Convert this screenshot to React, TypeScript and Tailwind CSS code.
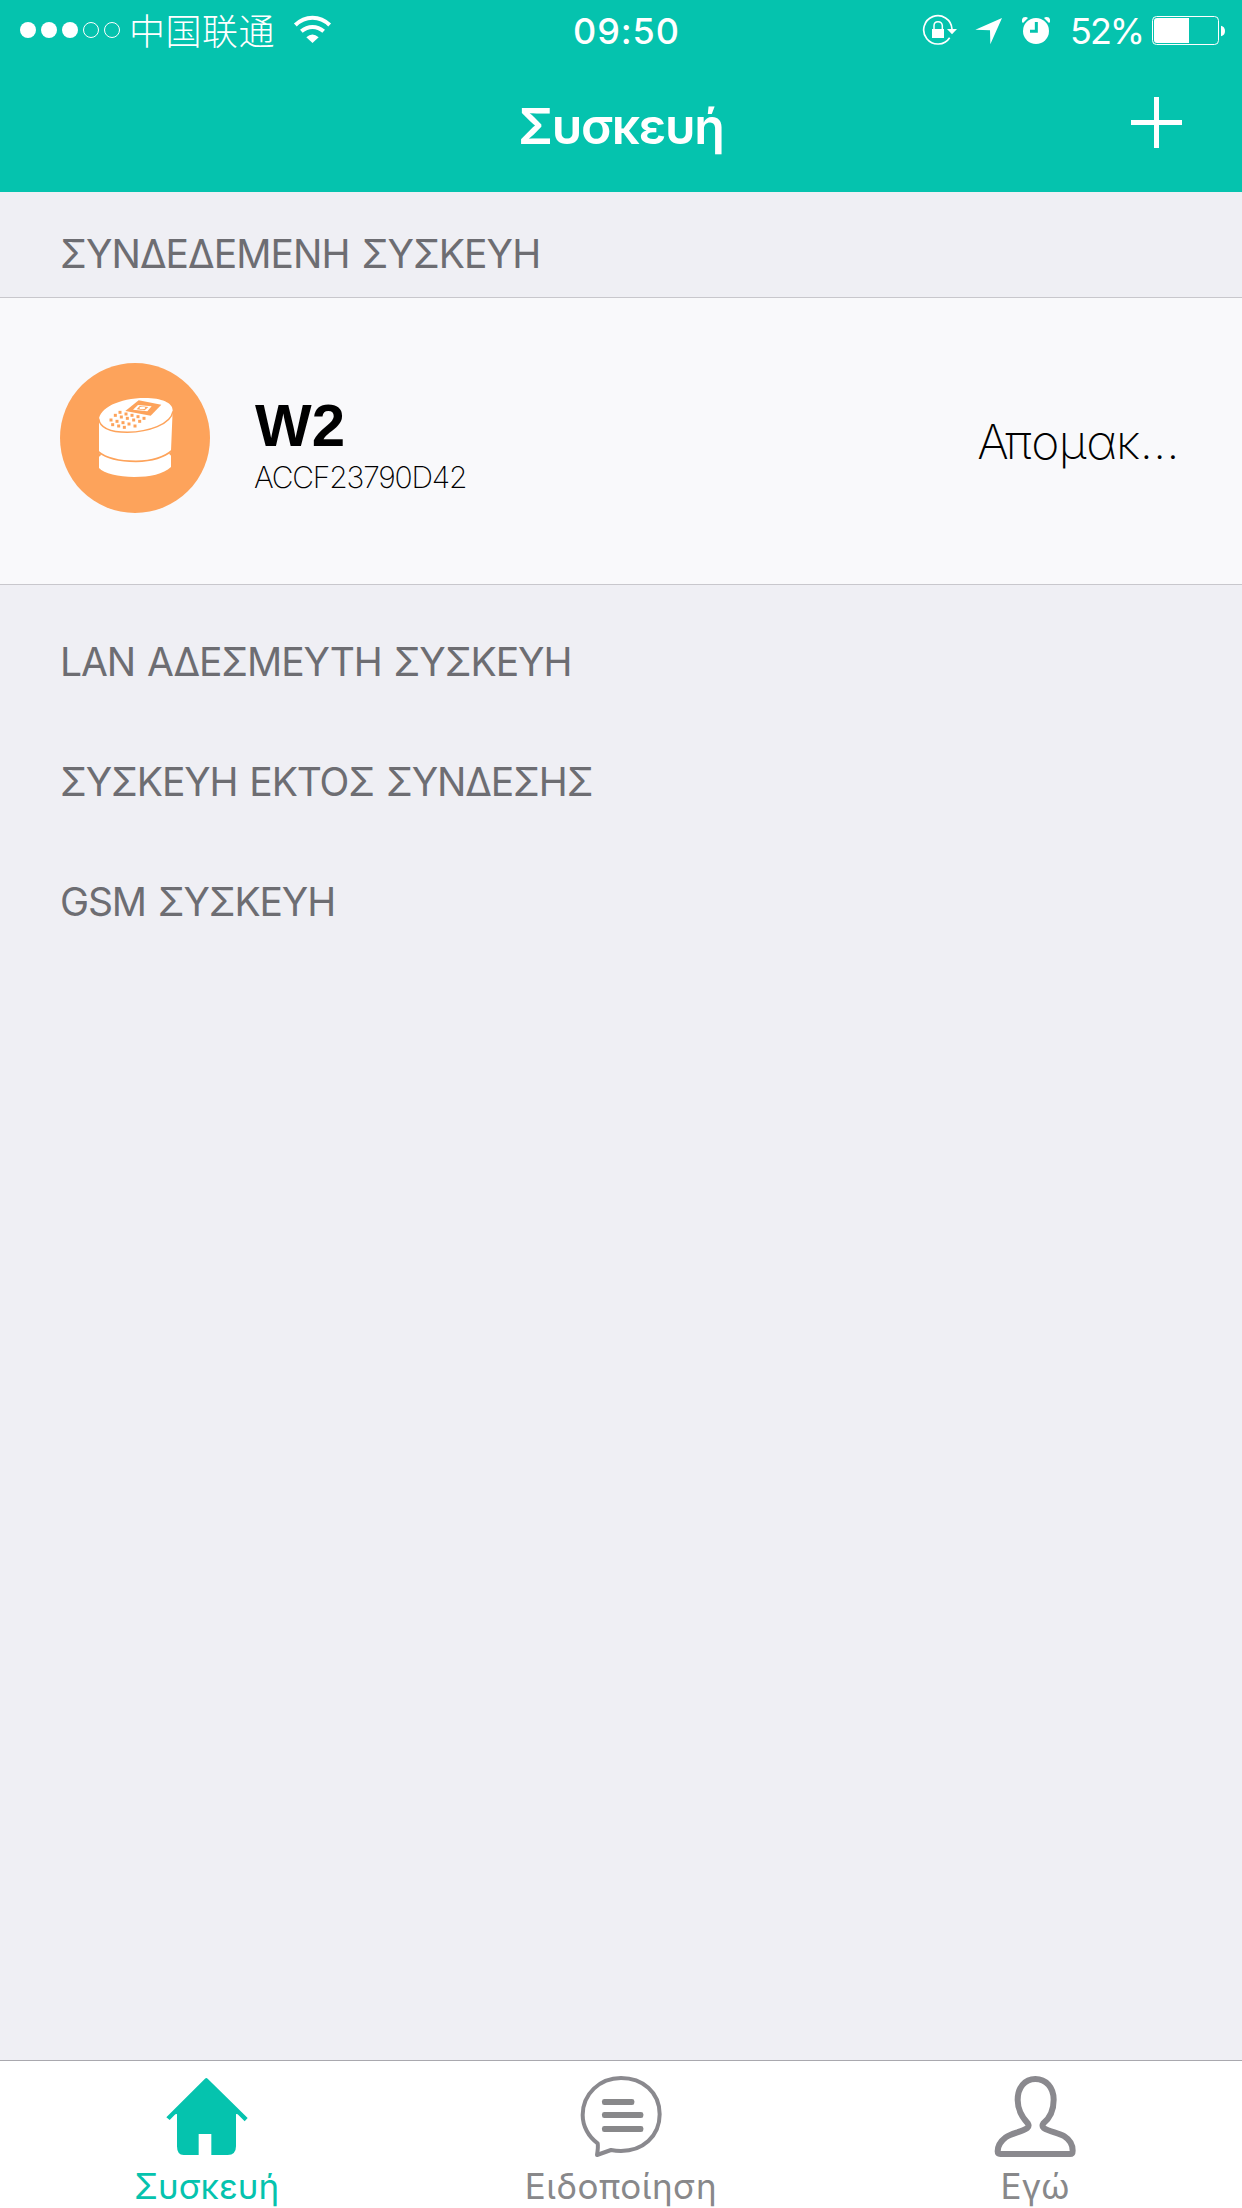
import type { ReactNode } from "react";
import clsx from "clsx";

const unboundSections = [
    { title: "LAN ΑΔΕΣΜΕΥΤΗ ΣΥΣΚΕΥΗ", tracking: "tracking-[-1.08px]" },
    { title: "ΣΥΣΚΕΥΗ ΕΚΤΟΣ ΣΥΝΔΕΣΗΣ", tracking: "tracking-[-1.12px]" },
    { title: "GSM ΣΥΣΚΕΥΗ", tracking: "tracking-[-1.15px]" },
];

function SignalDots() {
    return (
        <svg className="w-[100px] h-10" viewBox="60 30 300 120">
            {[84, 147, 210].map((cx) => (
                <circle key={cx} cx={cx} cy="90" r="24" fill="#fff" />
            ))}
            {[273, 336].map((cx) => (
                <circle key={cx} cx={cx} cy="90" r="22.500" fill="none" stroke="#fff" strokeWidth="3" />
            ))}
        </svg>
    );
}

function WifiIcon() {
    return (
        <svg className="w-[39px] h-10" viewBox="879 30 117 120">
            <g fill="none" stroke="#fff" strokeWidth="12">
                <path d="M886 75Q908 53 937.500 53T989 75" />
                <path d="M904 94Q919 81 937.500 81T971 94" />
            </g>
            <path d="M937.500 129L919 112Q937 95 956 112Z" fill="#fff" />
        </svg>
    );
}

function RotationLockIcon() {
    return (
        <svg className="w-9 h-10" viewBox="66 30 108 120">
            <path d="M156 87A42.500 42.500 0 1 0 149 113" fill="none" stroke="#fff" strokeWidth="5" />
            <path d="M141 87H171L156 103Z" fill="#fff" />
            <path d="M96 87H132V114H96Z" fill="#fff" />
            <path d="M102 89V77Q102 65 114 65T127 77V89" fill="none" stroke="#fff" strokeWidth="4.500" />
        </svg>
    );
}

function LocationIcon() {
    return (
        <svg className="w-7 h-10" viewBox="225 30 84 120">
            <path d="M306 54L271 133L270 91L226 89Z" fill="#fff" />
        </svg>
    );
}

function AlarmIcon() {
    return (
        <svg className="w-[30px] h-10" viewBox="363 30 90 120">
            <circle cx="408" cy="93" r="39" fill="#fff" />
            <path d="M366 66V58Q368 51 376 51Q381 51 384 54L369 69Z" fill="#fff" />
            <path d="M450 66V58Q448 51 440 51Q435 51 432 54L447 69Z" fill="#fff" />
            <path d="M409 66V94H390" fill="none" stroke="#05c3ae" strokeWidth="9" />
        </svg>
    );
}

function BatteryIcon() {
    return (
        <svg className="w-[75px] h-10" viewBox="753 30 225 120">
            <rect x="757.500" y="49.500" width="198" height="84" rx="12" fill="none" stroke="#fff" strokeWidth="3" />
            <path d="M867 54V129H771Q762 129 762 120V63Q762 54 771 54Z" fill="#fff" />
            <path d="M963 77Q975 80 975 93T963 109Z" fill="#fff" />
        </svg>
    );
}

function DeviceIcon() {
    const holes = [
        [240, 217], [226, 226], [258, 222], [213, 240], [244, 231], [276, 226], [231, 244], [262, 235], [294, 230],
        [218, 254], [249, 248], [281, 240], [312, 235], [236, 258], [267, 252], [299, 244], [253, 262], [285, 258],
    ];
    return (
        <svg className="w-[150px] h-[150px]" viewBox="60 69 450 450">
            <circle cx="285" cy="294" r="225" fill="#fda35b" />
            <path d="M177 240C177 205 237 174 315 174C365 174 398 188 398 211L393 333C393 333 393 375 393 381C370 402 330 411 283 411C235 411 192 400 177 384Z" fill="#fff" />
            <path d="M176 236C180 267 220 277 262 277C325 275 392 254 399 214" fill="none" stroke="#fda35b" strokeWidth="4.500" />
            <path d="M175 335C200 356 240 364 288 364C335 363 375 350 396 331" fill="none" stroke="#fda35b" strokeWidth="5" />
            <path d="M174 336L184 344L174 353ZM398 330L387 341L397 351Z" fill="#fda35b" />
            <path d="M296 181L364 194L332 227L256 213Z" fill="#fda35b" />
            <path d="M294 195L335 199L322 214L279 209Z" fill="#fff" />
            <path d="M299 198L325 201L314 211L290 208Z" fill="#fda35b" />
            <ellipse cx="307" cy="204" rx="9" ry="4" fill="#fff" />
            {holes.map(([x, y]) => (
                <rect key={`${x}-${y}`} x={x - 4.5} y={y - 4.5} width="9" height="9" fill="#fda35b" />
            ))}
        </svg>
    );
}

function HomeIcon() {
    return (
        <svg className="w-[82px] h-[82px] shrink-0" viewBox="197 78 246 246">
            <path d="M314 86Q318 82 322 86L442 204L433 214L412 193L407 192V289Q407 315 382 315H333V252H295V315H250Q230 315 230 289V192L225 193L208 210L198 202Z" fill="#05c3ae" />
        </svg>
    );
}

function MessageIcon() {
    return (
        <svg className="w-[82px] h-[82px] shrink-0" viewBox="238 78 246 246">
            <path d="M289 315L331 300Q346 303 361 303C425 303 477 260 477 193S425 84 361 84S246 132 246 195C246 229 264 261 291 280Q293 290 289 315Z" fill="none" stroke="#8a898e" strokeWidth="12" strokeLinejoin="round" />
            <g fill="#88888a">
                <rect x="304" y="147" width="97" height="18" rx="7" />
                <rect x="304" y="186" width="124" height="18" rx="7" />
                <rect x="304" y="228" width="124" height="18" rx="7" />
            </g>
        </svg>
    );
}

function ProfileIcon() {
    return (
        <svg className="w-[82px] h-[82px] shrink-0" viewBox="160 78 246 246">
            <path d="M284 87C252 87 231 113 231 150C231 181 245 203 262 221Q266 228 260 234C240 247 213 249 195 262C178 275 171 290 171 304Q171 312 179 312H388Q396 312 396 302C396 287 388 270 371 259C354 248 328 246 309 234Q303 228 308 220C330 202 339 180 339 149C339 112 316 87 284 87Z" fill="none" stroke="#8a898e" strokeWidth="18" strokeLinejoin="round" />
        </svg>
    );
}

function TabItem({ label, active, className, children }: { label: string; active?: boolean; className?: string; children: ReactNode }) {
    return (
        <button className="flex-1 flex flex-col items-center pt-[15px]">
            {children}
            <span className={clsx("mt-1.5 text-[35px] leading-[44px] whitespace-nowrap", active ? "text-[#05c3ae]" : "text-[#88888a]", className)}>
                {label}
            </span>
        </button>
    );
}

export default function App() {
    return (
        <div className="w-[1242px] h-[2208px] flex flex-col overflow-hidden bg-[#efeff4] font-['Inter','Noto_Sans_CJK_SC',sans-serif]">
            <header className="h-48 shrink-0 bg-[#05c3ae] text-white">
                {/* Status bar */}
                <div className="h-[60px] grid grid-cols-[1fr_auto_1fr] items-center pl-5 pr-4">
                    <div className="flex items-center">
                        <SignalDots />
                        <span className="ml-[9px] mb-0.5 text-[36px] leading-10 font-light tracking-[0.5px] font-['Noto_Sans_CJK_SC',sans-serif]">中国联通</span>
                        <span className="ml-[18px]"><WifiIcon /></span>
                    </div>
                    <span className="text-[36px] leading-10 font-medium tracking-[0.9px] pt-0.5 pl-[7px]">09:50</span>
                    <div className="flex items-center justify-end">
                        <RotationLockIcon />
                        <span className="ml-[17px]"><LocationIcon /></span>
                        <span className="ml-[18px]"><AlarmIcon /></span>
                        <span className="ml-[19px] w-[73px] text-[36px] leading-10 pt-0.5 tracking-[-2px]">52%</span>
                        <span className="ml-2"><BatteryIcon /></span>
                    </div>
                </div>

                {/* Navigation bar */}
                <div className="h-[132px] grid grid-cols-[1fr_auto_1fr] items-center px-[60px]">
                    <h1 className="col-start-2 text-[50px] leading-[60px] font-semibold tracking-[-1.3px]">Συσκευή</h1>
                    <button className="justify-self-end" aria-label="Προσθήκη">
                        <svg className="w-[51px] h-[51px] mb-2" viewBox="0 0 51 51">
                            <path d="M0 25.500H51M25.500 0V51" stroke="#fff" strokeWidth="5" />
                        </svg>
                    </button>
                </div>
            </header>

            <main className="flex-1 text-[#6d6d72]">
                <h2 className="h-[105px] pt-[38px] pl-[60px] text-[39px] leading-[48px] tracking-[-0.94px] [word-spacing:2px] whitespace-nowrap">ΣΥΝΔΕΔΕΜΕΝΗ ΣΥΣΚΕΥΗ</h2>

                <div className="h-[288px] flex items-center border-y border-[#c8c7cc] bg-[#f9f9fb] pl-[60px] pr-[63px] text-black">
                    <div className="pb-1.5"><DeviceIcon /></div>
                    <div className="ml-[44px] pt-[6px]">
                        <div className="pl-px text-[60px] leading-[64px] font-bold font-['Liberation_Sans',sans-serif]">W2</div>
                        <div className="pt-px text-[30px] leading-9 font-extralight tracking-[-1.2px]">ACCF23790D42</div>
                    </div>
                    <div className="ml-auto pt-0.5 text-[48px] leading-[60px] font-extralight tracking-[-0.6px]">Απομακ…</div>
                </div>

                <div className="pt-[17px]">
                    {unboundSections.map((section) => (
                        <h2 key={section.title} className={clsx("h-[120px] pt-[36px] pl-[60px] text-[39px] leading-[48px] [word-spacing:2px] whitespace-nowrap", section.tracking)}>
                            {section.title}
                        </h2>
                    ))}
                </div>
            </main>

            <nav className="h-[148px] shrink-0 flex border-t border-[#a9a8ae] bg-white">
                <TabItem label="Συσκευή" active className="pr-px"><HomeIcon /></TabItem>
                <TabItem label="Ειδοποίηση" className="tracking-[0.5px]"><MessageIcon /></TabItem>
                <TabItem label="Εγώ"><ProfileIcon /></TabItem>
            </nav>
        </div>
    );
}
